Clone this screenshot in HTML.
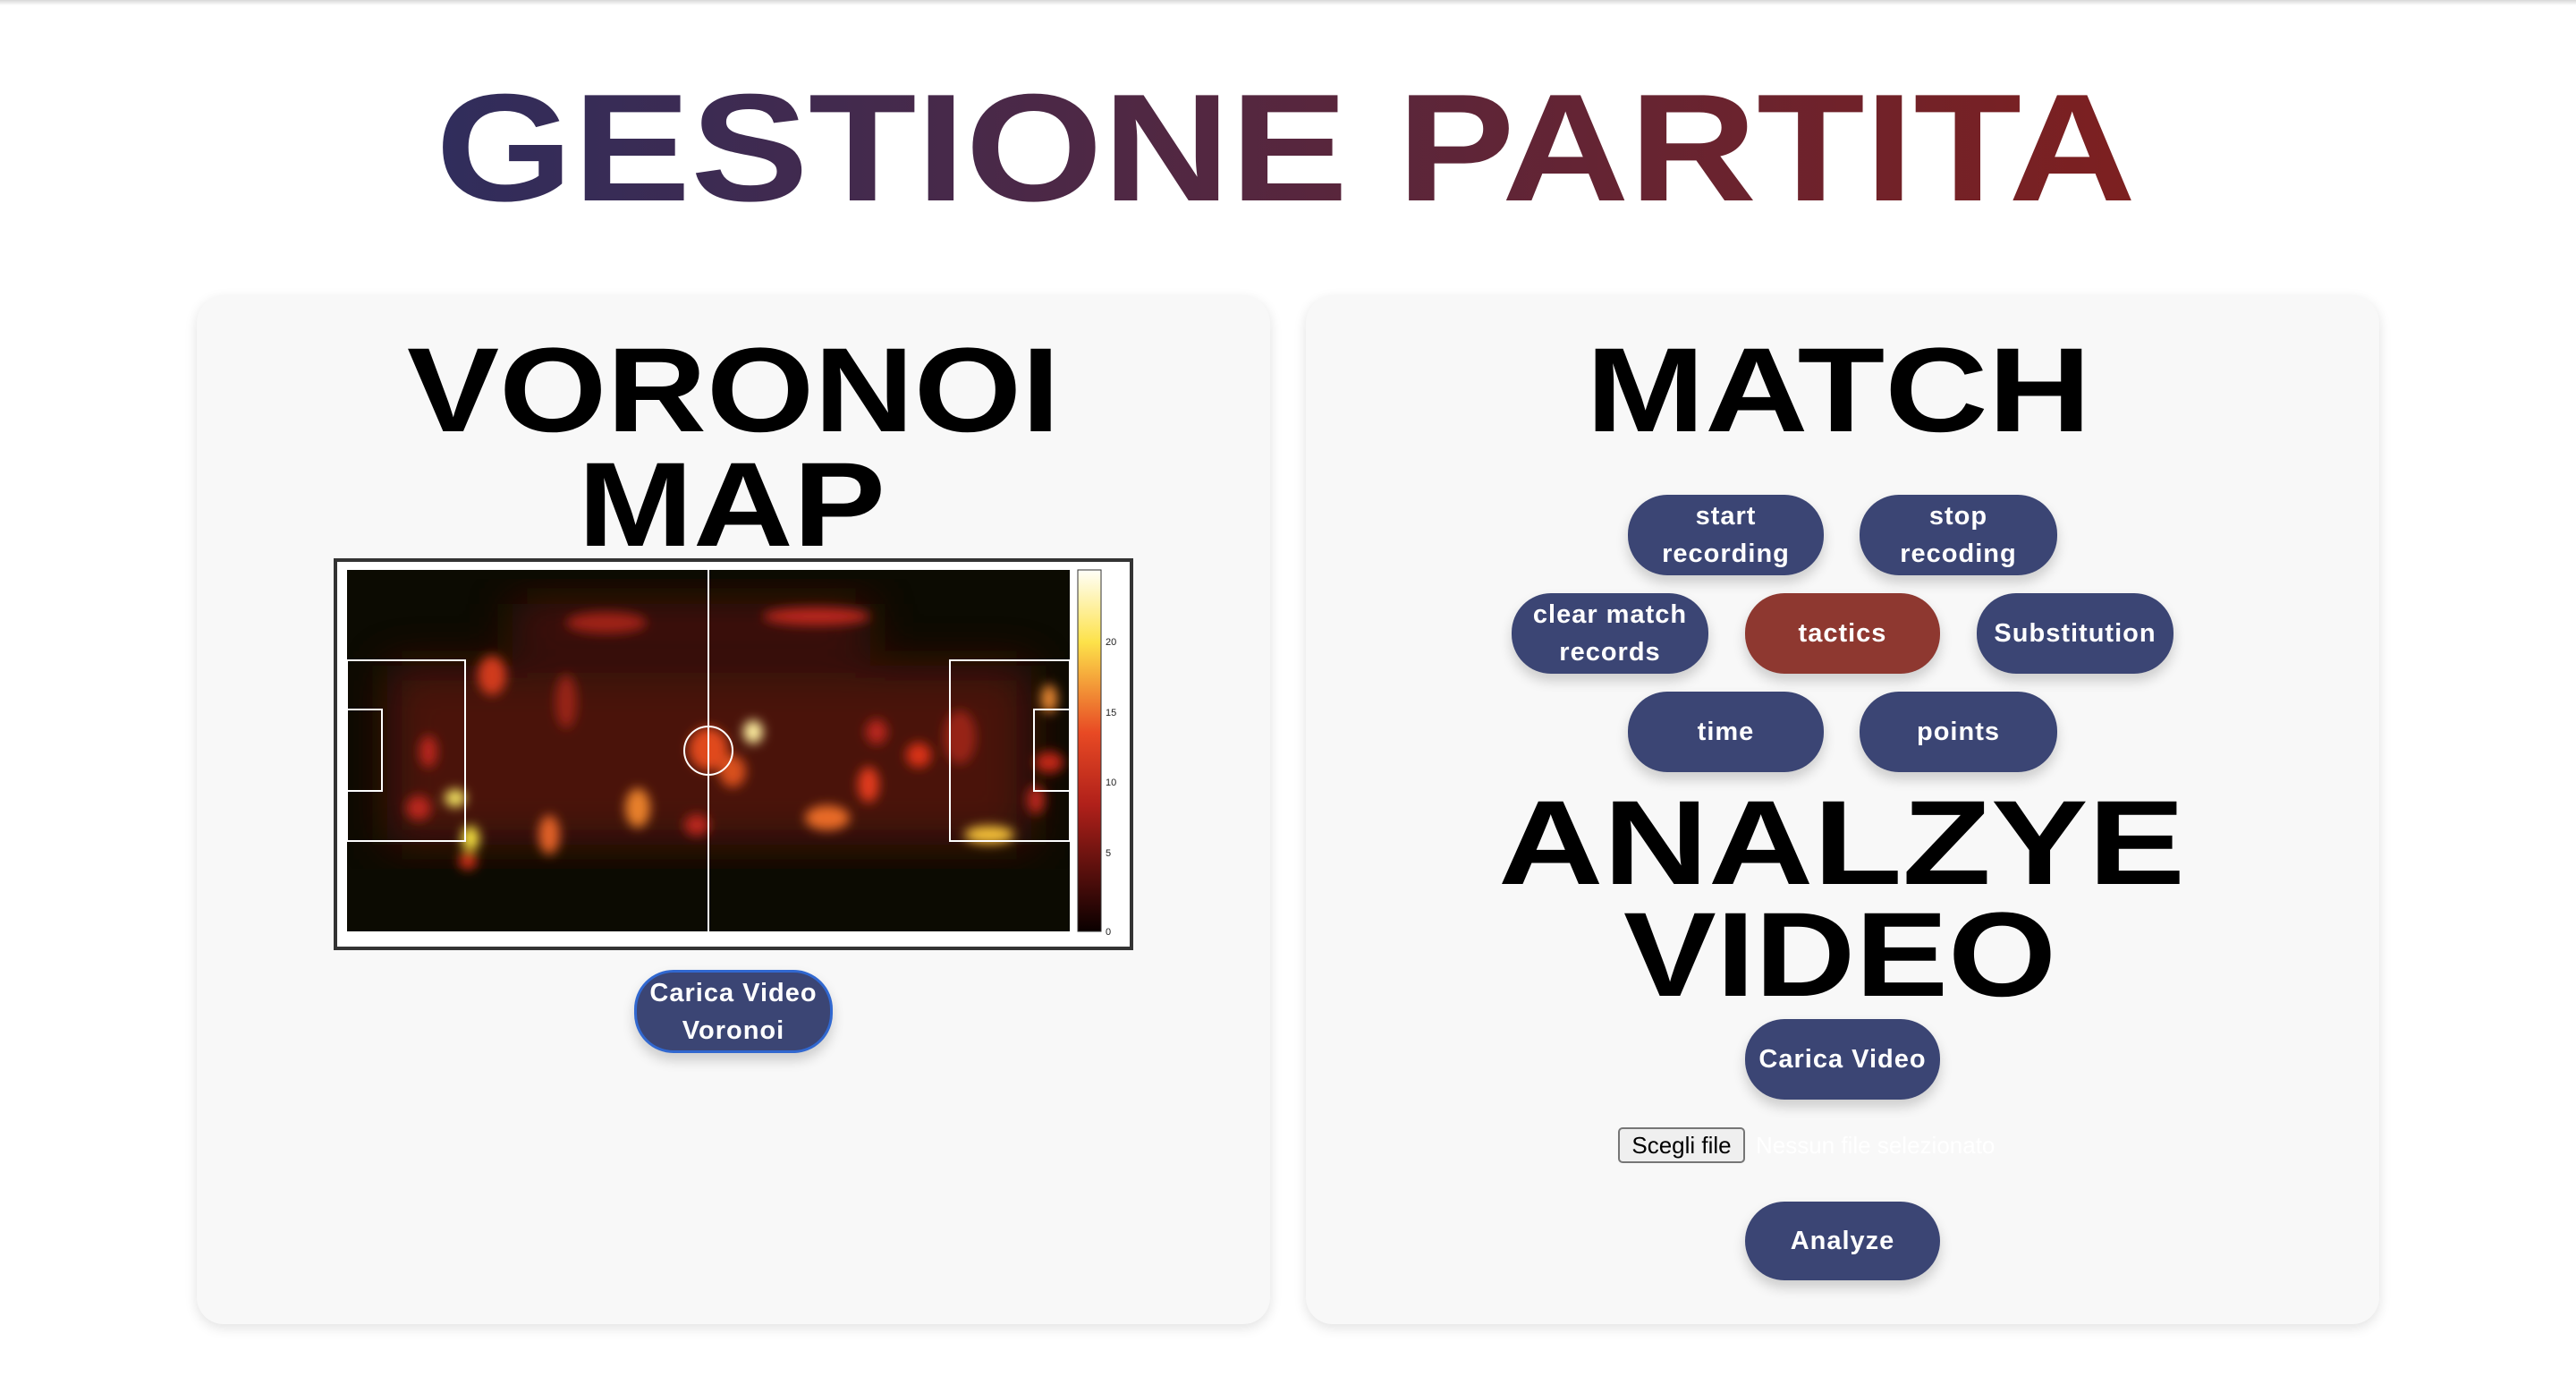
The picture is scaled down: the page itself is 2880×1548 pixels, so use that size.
<!DOCTYPE html>
<html><head><meta charset="utf-8"><style>
body{margin:0;width:2880px;height:1548px;background:#fff;position:relative;overflow:hidden;font-family:"Liberation Sans",sans-serif}
.top{position:absolute;left:0;top:0;width:2880px;height:6px;background:linear-gradient(#d8d8d8,#fff)}
.card{position:absolute;top:331px;width:1200px;height:1149px;background:#f8f8f8;border-radius:30px;box-shadow:0 4px 14px rgba(0,0,0,.12)}
.btn{position:absolute;background:#3b4574;color:#fff;border-radius:44px;display:flex;align-items:center;justify-content:center;text-align:center;font-size:29px;font-weight:bold;line-height:42px;letter-spacing:1px;box-shadow:0 8px 14px rgba(0,0,0,.18)}
svg.t{position:absolute;left:0;top:0}
</style></head><body>
<div class="top"></div>
<div class="card" style="left:220px"></div>
<div class="card" style="left:1460px"></div>
<svg class="t" width="2880" height="1548">
<defs><linearGradient id="g" x1="487" x2="2388" gradientUnits="userSpaceOnUse"><stop offset="0" stop-color="#302d5c"/><stop offset="1" stop-color="#7d2020"/></linearGradient></defs>
<text x="487" y="224" font-size="171" font-weight="bold" fill="url(#g)" textLength="1901" lengthAdjust="spacingAndGlyphs">GESTIONE PARTITA</text>
<text x="455" y="482" font-size="134" font-weight="bold" fill="#000" textLength="730" lengthAdjust="spacingAndGlyphs">VORONOI</text>
<text x="646" y="610" font-size="134" font-weight="bold" fill="#000" textLength="344" lengthAdjust="spacingAndGlyphs">MAP</text>
<text x="1773" y="482" font-size="134" font-weight="bold" fill="#000" textLength="565" lengthAdjust="spacingAndGlyphs">MATCH</text>
<text x="1675" y="988" font-size="134" font-weight="bold" fill="#000" textLength="768" lengthAdjust="spacingAndGlyphs">ANALZYE</text>
<text x="1815" y="1113" font-size="134" font-weight="bold" fill="#000" textLength="484" lengthAdjust="spacingAndGlyphs">VIDEO</text>
</svg>
<svg style="position:absolute;left:373px;top:624px" width="894" height="438">
<defs><filter id="b" x="-50%" y="-50%" width="200%" height="200%"><feGaussianBlur stdDeviation="6"/></filter>
<filter id="h"><feGaussianBlur stdDeviation="25"/></filter>
<clipPath id="c"><rect x="15" y="13" width="808" height="404"/></clipPath>
<linearGradient id="cb" x1="0" y1="1" x2="0" y2="0"><stop offset="0" stop-color="#0a0000"/><stop offset=".35" stop-color="#b0201a"/><stop offset=".55" stop-color="#e84a24"/><stop offset=".8" stop-color="#fde24a"/><stop offset="1" stop-color="#fffff8"/></linearGradient></defs>
<rect x="0" y="0" width="894" height="438" fill="#fff" stroke="#333" stroke-width="8"/>
<rect x="15" y="13" width="808" height="404" fill="#0c0b02"/>
<g clip-path="url(#c)">
<g filter="url(#h)" fill="#5a1208" opacity=".8">
<rect x="60" y="120" width="720" height="200"/><rect x="200" y="50" width="400" height="50"/>
</g>
<g filter="url(#b)" fill="#b8261a">
<ellipse cx="305" cy="72" rx="45" ry="12" opacity=".8"/><ellipse cx="540" cy="65" rx="60" ry="10"/>
<ellipse cx="177" cy="131" rx="16" ry="22" fill="#d03a1e"/><ellipse cx="106" cy="216" rx="10" ry="18"/>
<ellipse cx="136" cy="268" rx="12" ry="10" fill="#f0e060"/><ellipse cx="95" cy="279" rx="14" ry="14"/>
<ellipse cx="153" cy="313" rx="10" ry="14" fill="#f4e040"/><ellipse cx="150" cy="338" rx="10" ry="10" fill="#d03018"/>
<ellipse cx="241" cy="309" rx="12" ry="22" fill="#e06028"/><ellipse cx="340" cy="279" rx="14" ry="22" fill="#e8802a"/>
<ellipse cx="419" cy="213" rx="22" ry="24" fill="#e04a1e"/><ellipse cx="469" cy="194" rx="11" ry="13" fill="#fff0a0"/>
<ellipse cx="446" cy="238" rx="15" ry="18" fill="#d8501e"/><ellipse cx="406" cy="298" rx="14" ry="12"/>
<ellipse cx="598" cy="253" rx="12" ry="20" fill="#e03a1a"/><ellipse cx="552" cy="290" rx="25" ry="14" fill="#e86a28"/>
<ellipse cx="654" cy="220" rx="14" ry="14" fill="#d83018"/><ellipse cx="607" cy="194" rx="12" ry="14"/>
<ellipse cx="733" cy="309" rx="28" ry="10" fill="#f4c038"/><ellipse cx="800" cy="157" rx="9" ry="16" fill="#e88830"/>
<ellipse cx="800" cy="228" rx="16" ry="12" fill="#c02818"/><ellipse cx="785" cy="270" rx="10" ry="16"/>
<ellipse cx="260" cy="160" rx="12" ry="30" opacity=".7"/><ellipse cx="700" cy="200" rx="18" ry="30" opacity=".7"/>
</g>
</g>
<g fill="none" stroke="#fff" stroke-width="2">
<line x1="419" y1="13" x2="419" y2="417"/><circle cx="419" cy="215" r="27"/>
<rect x="15" y="114" width="132" height="202"/><rect x="15" y="169" width="39" height="91"/>
<rect x="689" y="114" width="134" height="202"/><rect x="783" y="169" width="40" height="91"/>
</g>
<rect x="832" y="13" width="26" height="404" fill="url(#cb)" stroke="#333" stroke-width="1"/>
<g font-size="11" fill="#222"><text x="863" y="421">0</text><text x="863" y="333">5</text><text x="863" y="254">10</text><text x="863" y="176">15</text><text x="863" y="97">20</text></g>
</svg>
<div class="btn" style="left:709px;top:1084px;width:216px;height:87px;border:3px solid #3168d0">Carica Video<br>Voronoi</div>
<div class="btn" style="left:1820px;top:553px;width:219px;height:90px">start<br>recording</div>
<div class="btn" style="left:2079px;top:553px;width:221px;height:90px">stop<br>recoding</div>
<div class="btn" style="left:1690px;top:663px;width:220px;height:90px">clear match<br>records</div>
<div class="btn" style="left:1951px;top:663px;width:218px;height:90px;background:#8e3830">tactics</div>
<div class="btn" style="left:2210px;top:663px;width:220px;height:90px">Substitution</div>
<div class="btn" style="left:1820px;top:773px;width:219px;height:90px">time</div>
<div class="btn" style="left:2079px;top:773px;width:221px;height:90px">points</div>
<div class="btn" style="left:1951px;top:1139px;width:218px;height:90px">Carica Video</div>
<div style="position:absolute;left:1809px;top:1260px;width:142px;height:40px;border:2px solid #767676;border-radius:5px;background:#efefef;box-sizing:border-box;font-size:26px;line-height:36px;text-align:center;color:#000">Scegli file</div>
<div style="position:absolute;left:1963px;top:1262px;font-size:26px;line-height:36px;color:#fff">Nessun file selezionato</div>
<div class="btn" style="left:1951px;top:1343px;width:218px;height:88px">Analyze</div>
</body></html>
